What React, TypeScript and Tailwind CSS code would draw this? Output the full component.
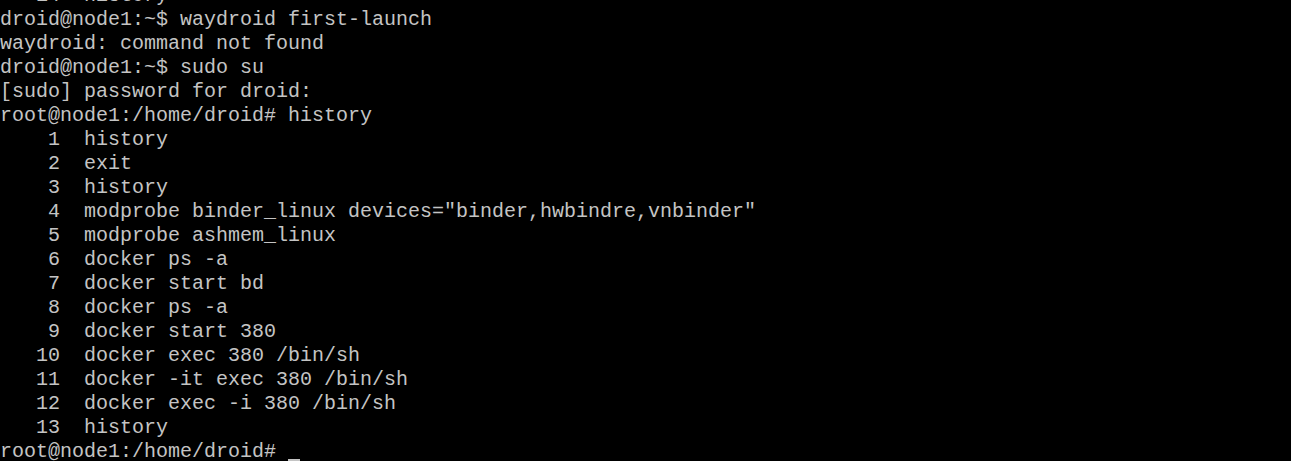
const LINES = [
  "   14  history",
  "droid@node1:~$ waydroid first-launch",
  "waydroid: command not found",
  "droid@node1:~$ sudo su",
  "[sudo] password for droid:",
  "root@node1:/home/droid# history",
  "    1  history",
  "    2  exit",
  "    3  history",
  '    4  modprobe binder_linux devices="binder,hwbindre,vnbinder"',
  "    5  modprobe ashmem_linux",
  "    6  docker ps -a",
  "    7  docker start bd",
  "    8  docker ps -a",
  "    9  docker start 380",
  "   10  docker exec 380 /bin/sh",
  "   11  docker -it exec 380 /bin/sh",
  "   12  docker exec -i 380 /bin/sh",
  "   13  history",
];

export default function App() {
  return (
    <div className="h-[461px] w-[1291px] overflow-hidden bg-black font-['Liberation_Mono',monospace] text-[20px] leading-[24px] text-[#c4c4c4]">
      <div className="-mt-[16px] flex flex-col">
        {LINES.map((line, i) => (
          <pre key={i} className="h-6 whitespace-pre font-['Liberation_Mono',monospace]">
            {line}
          </pre>
        ))}
        <pre className="flex h-6 items-end whitespace-pre font-['Liberation_Mono',monospace]">
          <span>root@node1:/home/droid# </span>
          <span className="mb-[2px] h-[3px] w-3 bg-[#c4c4c4]" />
        </pre>
      </div>
    </div>
  );
}
